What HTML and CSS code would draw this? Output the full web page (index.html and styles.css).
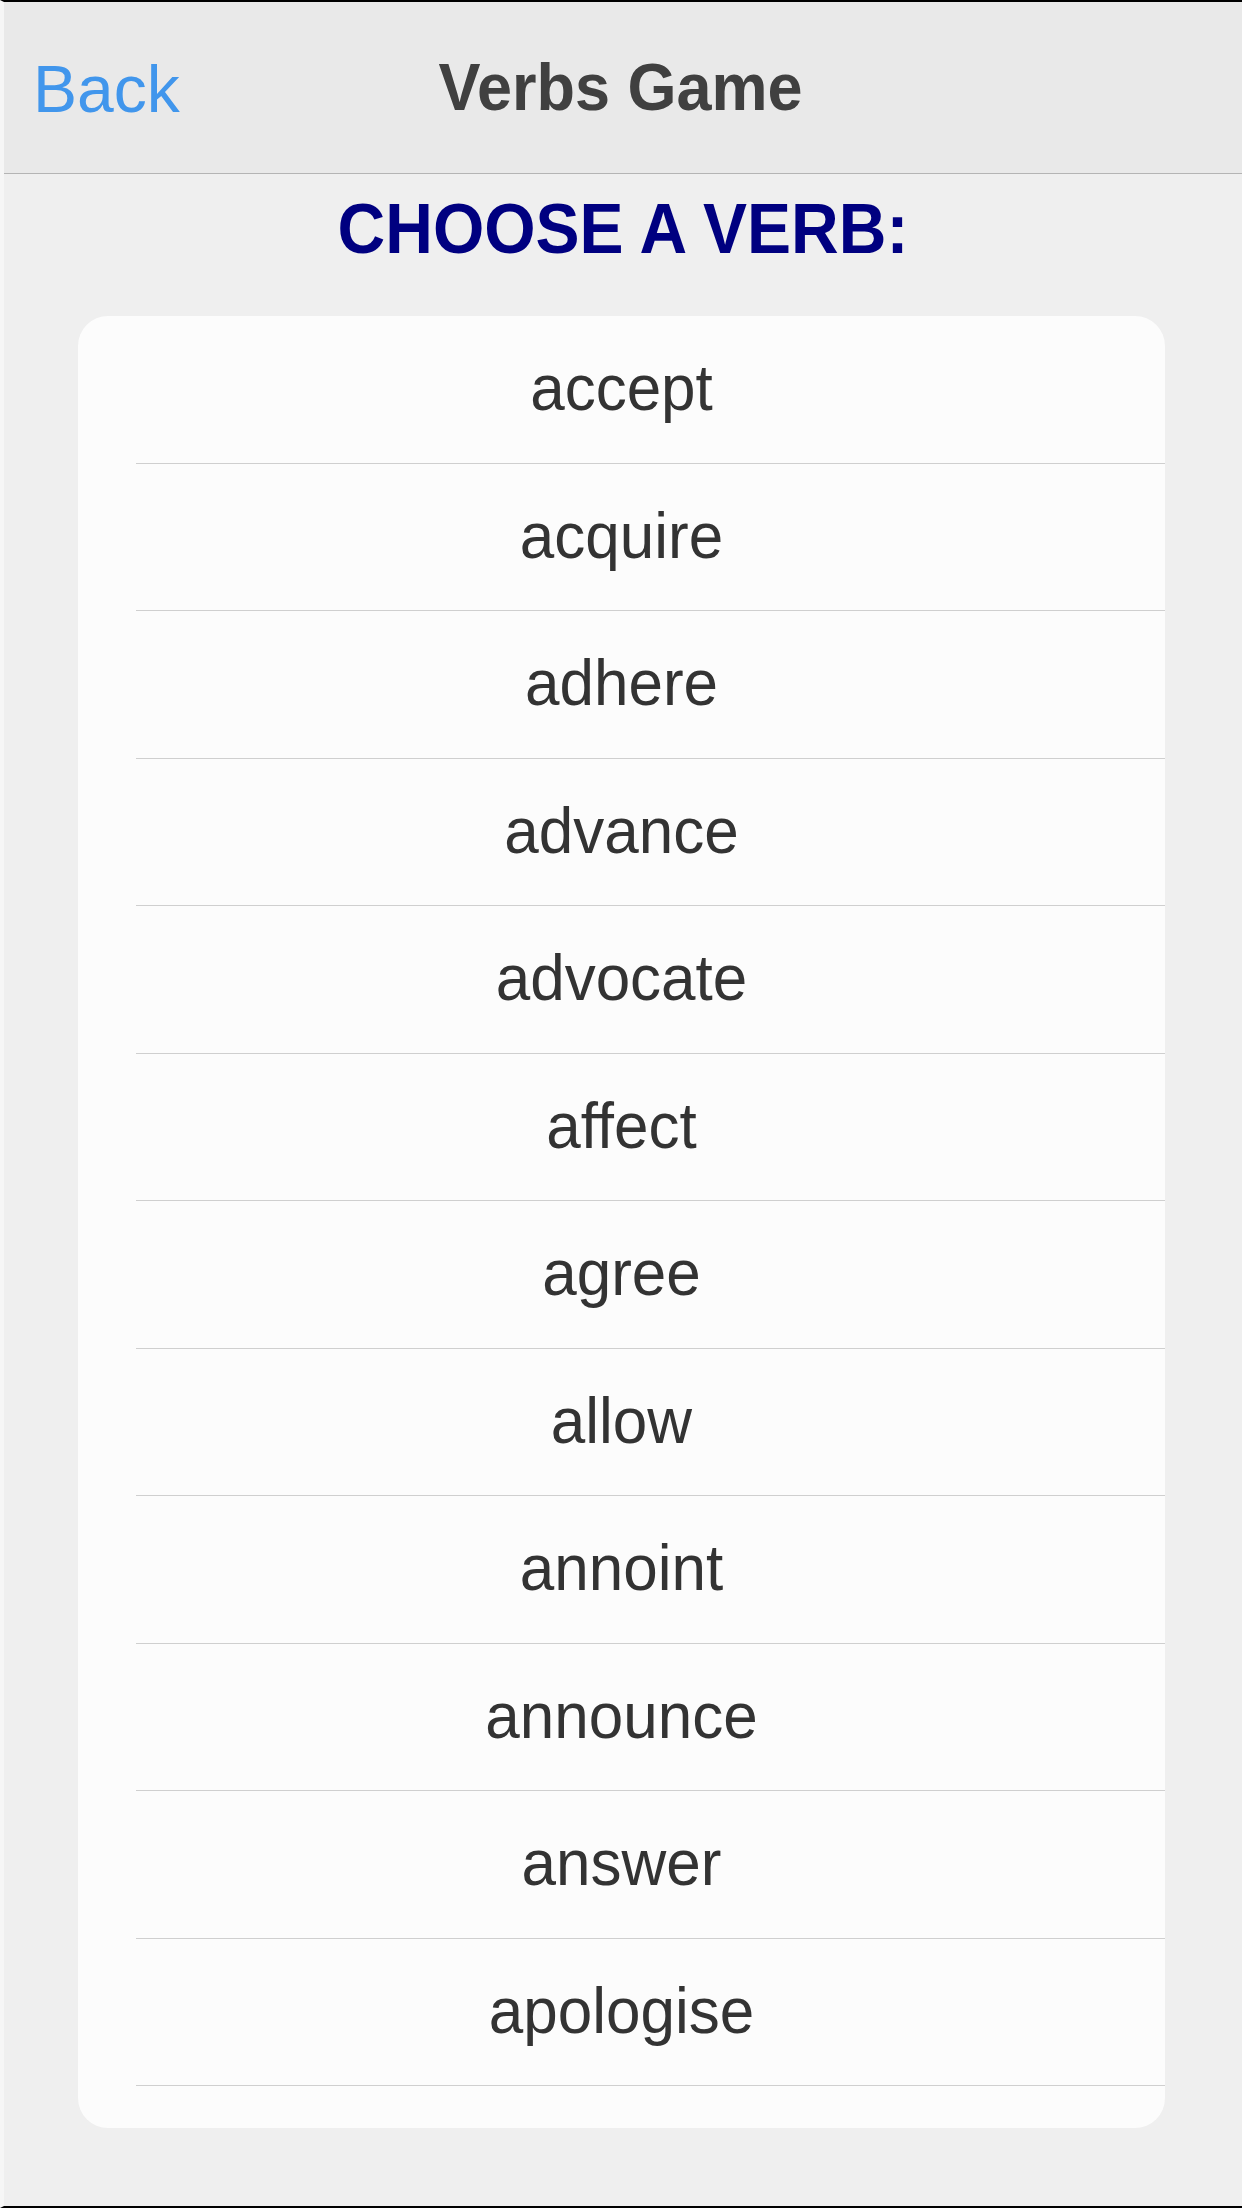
FILE: index.html
```html
<!DOCTYPE html>
<html lang="en">
<head>
<meta charset="utf-8">
<title>Verbs Game</title>
<link rel="stylesheet" href="styles.css">
</head>
<body>
<div class="page">
  <header class="nav">
    <div class="nav-left"><span class="back txt">Back</span></div>
    <div class="nav-title"><span class="title txt">Verbs Game</span></div>
    <div class="nav-right"></div>
  </header>
  <h1 class="heading"><span class="txt">CHOOSE A VERB:</span></h1>
  <ul class="card">
    <li class="row"><span class="txt">accept</span></li>
    <li class="row"><span class="txt">acquire</span></li>
    <li class="row"><span class="txt">adhere</span></li>
    <li class="row"><span class="txt">advance</span></li>
    <li class="row"><span class="txt">advocate</span></li>
    <li class="row"><span class="txt">affect</span></li>
    <li class="row"><span class="txt">agree</span></li>
    <li class="row"><span class="txt">allow</span></li>
    <li class="row"><span class="txt">annoint</span></li>
    <li class="row"><span class="txt">announce</span></li>
    <li class="row"><span class="txt">answer</span></li>
    <li class="row"><span class="txt">apologise</span></li>
  </ul>
</div>
</body>
</html>
```

FILE: styles.css
```css
* { box-sizing: border-box; }
html, body {
  margin: 0;
  padding: 0;
  background: #efefef;
}
body {
  font-family: "Liberation Sans", Arial, Helvetica, sans-serif;
}
.page {
  width: 1242px;
  height: 2208px;
  border-top: 2px solid #000;
  border-bottom: 2px solid #000;
  border-left: 4px solid #f6f6f6;
  background: #efefef;
  display: flex;
  flex-direction: column;
  overflow: hidden;
}
.txt {
  display: inline-block;
  transform-origin: 50% calc(50% + 0.3465em);
  white-space: nowrap;
}
.nav {
  height: 172px;
  background: #e9e9e9;
  border-bottom: 1px solid #b4b4b4;
  display: grid;
  grid-template-columns: 1fr auto 1fr;
  padding-right: 5px;
  flex: none;
}
.nav-left {
  padding-left: 29px;
  padding-top: 2px;
}
.back {
  font-size: 66px;
  line-height: 170px;
  color: #4196ec;
}
.nav-title {
  padding-top: 2px;
}
.title {
  font-size: 63px;
  line-height: 169px;
  font-weight: bold;
  color: #404040;
  transform: scaleY(1.06);
}
.heading {
  margin: 0 0 28px;
  height: 114px;
  text-align: center;
  font-size: 66px;
  line-height: 112px;
  font-weight: bold;
  color: #000080;
  flex: none;
}
.heading .txt {
  transform: scaleY(1.06);
}
.card {
  list-style: none;
  margin: 0 77px 0 74px;
  padding: 0 0 42px;
  background: #fcfcfc;
  border-radius: 30px;
  flex: none;
}
.row {
  height: 147.5px;
  line-height: 146.5px;
  text-align: center;
  font-size: 62px;
  color: #333333;
  background: linear-gradient(#cfcfcf, #cfcfcf) no-repeat right bottom / calc(100% - 58px) 1px;
}
.row .txt {
  transform: scaleY(1.05);
}
```
